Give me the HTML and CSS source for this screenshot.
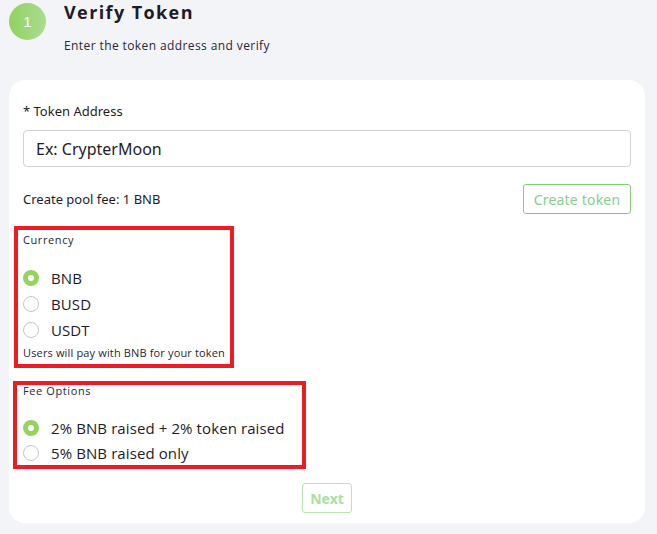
FILE: index.html
```html
<!DOCTYPE html>
<html>
<head>
<meta charset="utf-8">
<link rel="stylesheet" href="styles.css">
</head>
<body>
<div class="page">
  <div class="step-head">
    <div class="step-num">1</div>
    <div class="step-text">
      <div class="step-title">Verify Token</div>
      <div class="step-sub">Enter the token address and verify</div>
    </div>
  </div>
  <div class="card">
    <div class="field-label">* Token Address</div>
    <div class="input"><span class="placeholder">Ex: CrypterMoon</span></div>
    <div class="fee-row">
      <span class="fee-text">Create pool fee: 1 BNB</span>
      <span class="btn-create">Create token</span>
    </div>
    <div class="mark mark-currency">
      <div class="group-title">Currency</div>
      <div class="radios">
        <div class="radio-row"><span class="radio checked"></span><span class="radio-label">BNB</span></div>
        <div class="radio-row"><span class="radio"></span><span class="radio-label">BUSD</span></div>
        <div class="radio-row"><span class="radio"></span><span class="radio-label">USDT</span></div>
      </div>
      <div class="hint">Users will pay with BNB for your token</div>
    </div>
    <div class="mark mark-fee">
      <div class="group-title">Fee Options</div>
      <div class="radios radios-fee">
        <div class="radio-row"><span class="radio checked"></span><span class="radio-label">2% BNB raised + 2% token raised</span></div>
        <div class="radio-row"><span class="radio"></span><span class="radio-label">5% BNB raised only</span></div>
      </div>
    </div>
    <div class="next-wrap"><span class="btn-next">Next</span></div>
  </div>
</div>
</body>
</html>
```
FILE: styles.css
```css
html, body {
  margin: 0;
  padding: 0;
  background: #f3f4f8;
}
body {
  font-family: "Noto Sans", "Open Sans", sans-serif;
  color: #1e1b2c;
}
.page {
  padding: 3px 12px 11px 9px;
}
.step-head {
  display: flex;
  gap: 18px;
  height: 77px;
}
.step-num {
  width: 37px;
  height: 37px;
  border-radius: 50%;
  background: linear-gradient(90deg, #92d160, #a9dd8f);
  color: #fff;
  font-family: "Liberation Sans", sans-serif;
  font-size: 15px;
  display: flex;
  align-items: center;
  justify-content: center;
}
.step-title {
  font-family: "Open Sans", sans-serif;
  font-weight: 700;
  font-size: 18px;
  line-height: 18px;
  letter-spacing: 1.4px;
  color: #1f1b2b;
}
.step-sub {
  font-family: "Open Sans", sans-serif;
  font-size: 12px;
  line-height: 16px;
  letter-spacing: 0.4px;
  margin-top: 17px;
  color: #2a2638;
}
.card {
  background: #fff;
  border-radius: 16px;
  padding: 22px 14px 10px 14px;
}
.field-label {
  font-size: 13px;
  line-height: 18px;
}
.input {
  margin-top: 10px;
  height: 37px;
  box-sizing: border-box;
  border: 1px solid #d2d2da;
  border-radius: 4px;
  display: flex;
  align-items: center;
  padding-left: 12px;
}
.placeholder {
  font-size: 16px;
  color: #1e1b2c;
}
.fee-row {
  margin-top: 17px;
  display: flex;
  justify-content: space-between;
  align-items: center;
}
.fee-text {
  font-size: 13px;
}
.btn-create {
  height: 30px;
  width: 108px;
  box-sizing: border-box;
  border: 1px solid #7fd36c;
  border-radius: 3px;
  color: #86cd92;
  font-size: 14px;
  letter-spacing: 0.2px;
  display: flex;
  align-items: center;
  justify-content: center;
}
.mark {
  border: 4px solid #ed1c24;
  box-sizing: border-box;
}
.mark-currency {
  margin-top: 12px;
  margin-left: -9px;
  width: 220px;
  padding: 3px 0 4px 5px;
}
.mark-fee {
  margin-top: 13px;
  margin-left: -10px;
  width: 293px;
  padding: 0 0 0 6px;
}
.group-title {
  font-family: "Open Sans", sans-serif;
  font-size: 11px;
  font-weight: 500;
  line-height: 14px;
  letter-spacing: 0.6px;
  color: #2a2638;
}
.mark-fee .group-title {
  line-height: 12px;
}
.radios {
  margin-top: 18px;
}
.radios-fee {
  margin-top: 18px;
}
.radio-row {
  display: flex;
  align-items: center;
  height: 26px;
}
.radios-fee .radio-row {
  height: 25px;
}
.radio {
  width: 16px;
  height: 16px;
  box-sizing: border-box;
  border-radius: 50%;
  border: 1px solid #c6c6c6;
  background: #fff;
  flex: none;
}
.radio.checked {
  border: 5px solid #95d35f;
}
.radio-label {
  margin-left: 12px;
  font-family: "Open Sans", sans-serif;
  font-size: 15px;
  letter-spacing: 0.1px;
}
.hint {
  margin-top: 3px;
  font-family: "Open Sans", sans-serif;
  font-size: 11px;
  line-height: 14px;
  letter-spacing: 0.15px;
  color: #2a2638;
}
.next-wrap {
  display: flex;
  justify-content: center;
  margin-top: 14px;
}
.btn-next {
  width: 50px;
  height: 30px;
  box-sizing: border-box;
  border: 1px solid #b8e7ad;
  border-radius: 3px;
  color: #a9e1a2;
  font-weight: 700;
  font-size: 14px;
  display: flex;
  align-items: center;
  justify-content: center;
}
```
